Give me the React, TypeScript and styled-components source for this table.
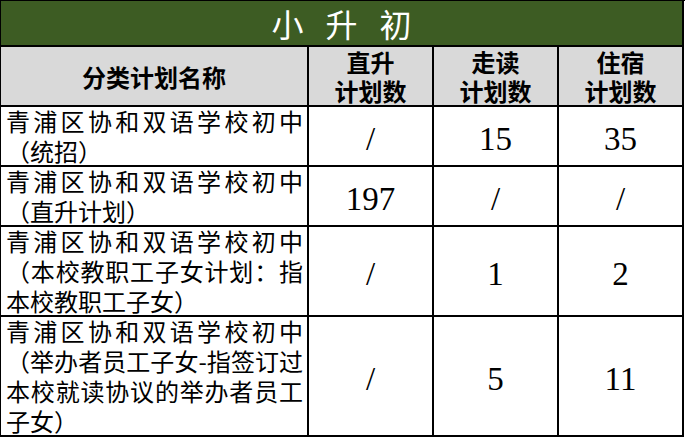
import React from 'react';
import styled, {createGlobalStyle} from 'styled-components';

const GlobalStyle = createGlobalStyle`
	html, body {
		margin: 0;
		padding: 0;
		background: #ffffff;
	}
`;

const CJK = `"Noto Sans CJK SC", "Noto Sans", sans-serif`;

const Table = styled.div`
	width: 685px;
	box-sizing: border-box;
	border-top: 1px solid #000;
	border-left: 1px solid #000;
	display: grid;
	grid-template-columns: 308px 125px 125px 125px;
	font-family: ${CJK};
	color: #000;
`;

const Title = styled.div`
	grid-column: 1 / -1;
	height: 46px;
	box-sizing: border-box;
	background: #3d5c23;
	border-right: 2px solid #000;
	border-bottom: 2px solid #000;
	display: flex;
	align-items: center;
	justify-content: center;
	padding-left: 22px;
	font-size: 32px;
	letter-spacing: 22px;
	color: #ffffff;
	line-height: 1;
`;

const HeadCell = styled.div`
	height: 60px;
	box-sizing: border-box;
	background: #d9d9d9;
	border-right: 2px solid #000;
	border-bottom: 2px solid #000;
	display: flex;
	flex-direction: column;
	align-items: center;
	justify-content: center;
	font-size: 24px;
	font-weight: 700;
	line-height: 29px;
	text-align: center;
`;

const NameCell = styled.div<{$h: number}>`
	height: ${(p) => p.$h}px;
	box-sizing: border-box;
	border-right: 2px solid #000;
	border-bottom: 2px solid #000;
	padding: 0 4px 0 5px;
	display: flex;
	flex-direction: column;
	justify-content: center;
	font-size: 24px;
	line-height: 30px;
`;

const Line = styled.div<{$spread?: boolean}>`
	white-space: nowrap;
	text-align: ${(p) => (p.$spread ? 'justify' : 'left')};
	text-align-last: ${(p) => (p.$spread ? 'justify' : 'left')};
`;

const NumCell = styled.div<{$h: number}>`
	height: ${(p) => p.$h}px;
	box-sizing: border-box;
	border-right: 2px solid #000;
	border-bottom: 2px solid #000;
	display: flex;
	align-items: center;
	justify-content: center;
	padding-top: 6px;
	font-family: "Liberation Serif", "Times New Roman", serif;
	font-size: 33px;
`;

type Row = {
	lines: {text: string; spread?: boolean}[];
	h: number;
	values: string[];
};

const rows: Row[] = [
	{
		h: 60,
		lines: [{text: '青浦区协和双语学校初中', spread: true}, {text: '（统招）'}],
		values: ['/', '15', '35'],
	},
	{
		h: 60,
		lines: [{text: '青浦区协和双语学校初中', spread: true}, {text: '（直升计划）'}],
		values: ['197', '/', '/'],
	},
	{
		h: 90,
		lines: [
			{text: '青浦区协和双语学校初中', spread: true},
			{text: '（本校教职工子女计划：指', spread: true},
			{text: '本校教职工子女）'},
		],
		values: ['/', '1', '2'],
	},
	{
		h: 120,
		lines: [
			{text: '青浦区协和双语学校初中', spread: true},
			{text: '（举办者员工子女-指签订过', spread: true},
			{text: '本校就读协议的举办者员工', spread: true},
			{text: '子女）'},
		],
		values: ['/', '5', '11'],
	},
];

const App = () => (
	<>
		<GlobalStyle />
		<Table>
			<Title>小升初</Title>
			<HeadCell>分类计划名称</HeadCell>
			<HeadCell>
				<div>直升</div>
				<div>计划数</div>
			</HeadCell>
			<HeadCell>
				<div>走读</div>
				<div>计划数</div>
			</HeadCell>
			<HeadCell>
				<div>住宿</div>
				<div>计划数</div>
			</HeadCell>
			{rows.map((row, i) => (
				<React.Fragment key={i}>
					<NameCell $h={row.h}>
						{row.lines.map((l, j) => (
							<Line key={j} $spread={l.spread}>
								{l.text}
							</Line>
						))}
					</NameCell>
					{row.values.map((v, j) => (
						<NumCell key={j} $h={row.h}>
							{v}
						</NumCell>
					))}
				</React.Fragment>
			))}
		</Table>
	</>
);

export default App;
